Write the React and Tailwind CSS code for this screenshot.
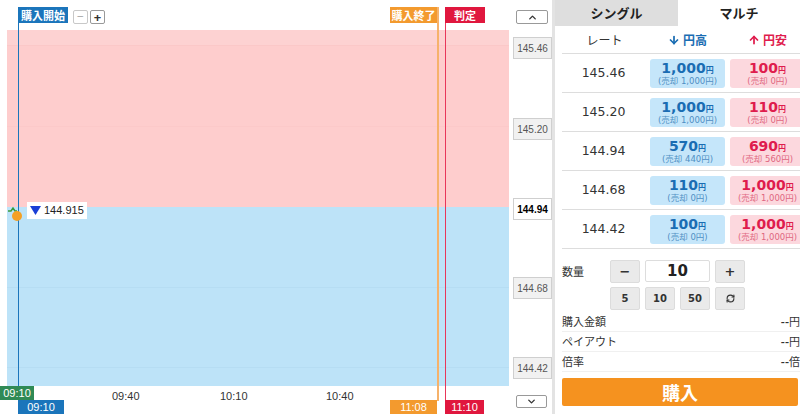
import { ArrowDown, ArrowUp, ChevronDown, ChevronUp, RefreshCw } from "lucide-react";

const jp = "font-['Noto_Sans_CJK_JP',sans-serif]";
const num = "font-['DejaVu_Sans','Noto_Sans_CJK_JP',sans-serif]";
const arial = "font-['Liberation_Sans','Noto_Sans_CJK_JP',sans-serif]";

const rows = [
    { rate: "145.46", up: "1,000", upSell: "1,000", down: "100", downSell: "0" },
    { rate: "145.20", up: "1,000", upSell: "1,000", down: "110", downSell: "0" },
    { rate: "144.94", up: "570", upSell: "440", down: "690", downSell: "560" },
    { rate: "144.68", up: "110", upSell: "0", down: "1,000", downSell: "1,000" },
    { rate: "144.42", up: "100", upSell: "0", down: "1,000", downSell: "1,000" },
];

const axisPrices = [
    { price: "145.46", top: "top-[37px]" },
    { price: "145.20", top: "top-[118px]" },
    { price: "144.94", top: "top-[198px]", current: true },
    { price: "144.68", top: "top-[277px]" },
    { price: "144.42", top: "top-[357px]" },
];

const Chart = () => {
    return (
        <div className="relative w-[509px] h-full flex flex-col">
            <div className="h-[30px] flex items-start pt-[10px] pl-[73px] gap-[2px]">
                <div className="w-[15px] h-[14px] border border-[#c8c8c8] rounded-[2px] flex items-center justify-center text-[#aaa] text-[12px] leading-none">−</div>
                <div className="w-[15px] h-[14px] border border-[#999] rounded-[2px] flex items-center justify-center text-[#333] text-[13px] font-bold leading-none">+</div>
            </div>
            <div className="ml-[7px] h-[177px] bg-[#fecdcd] flex flex-col">
                <div className="h-[16px] bg-[#fdd2d2] border-b border-[#fbc8c8]"></div>
                <div className="h-[81px] border-b border-[#fcc9c9]"></div>
            </div>
            <div className="ml-[7px] h-[179px] bg-[#bde3f8] flex flex-col">
                <div className="h-[81px] border-b border-[#b6ddf3]"></div>
                <div className="h-[80px] border-b border-[#b6ddf3]"></div>
            </div>
            <div className={`relative h-[28px] ${arial} text-[11px] text-[#333]`}>
                <span className="absolute left-[112px] top-[2px]">09:40</span>
                <span className="absolute left-[220px] top-[2px]">10:10</span>
                <span className="absolute left-[326px] top-[2px]">10:40</span>
            </div>

            {/* markers */}
            <div className="absolute left-[18px] top-[7px] bottom-0 w-px bg-[#1b75bb]"></div>
            <div className="absolute left-[437px] top-[7px] bottom-[13px] w-[2px] bg-[#f6b26b]"></div>
            <div className="absolute left-[445px] top-[7px] bottom-[13px] w-px bg-[#e8375a]"></div>

            <div className={`absolute left-[18px] top-[7px] h-[16px] px-[3px] bg-[#1b75bb] text-white text-[11px] font-bold leading-[16px] ${jp}`}>購入開始</div>
            <div className={`absolute left-[390px] top-[7px] h-[16px] w-[47px] bg-[#f39a2e] text-white text-[11px] font-bold leading-[16px] text-center ${jp}`}>購入終了</div>
            <div className={`absolute left-[445px] top-[7px] h-[16px] w-[40px] bg-[#e0173e] text-white text-[11px] font-bold leading-[16px] text-center ${jp}`}>判定</div>

            <div className={`absolute left-0 top-[386px] h-[14px] w-[34px] bg-[#2f8a55] text-white text-[11px] leading-[14px] text-center ${arial}`}>09:10</div>
            <div className={`absolute left-[18px] top-[400px] h-[14px] w-[46px] bg-[#1b75bb] text-white text-[11px] leading-[14px] text-center ${arial}`}>09:10</div>
            <div className={`absolute left-[390px] top-[400px] h-[14px] w-[47px] bg-[#f39a2e] text-white text-[11px] leading-[14px] text-center ${arial}`}>11:08</div>
            <div className={`absolute left-[445px] top-[400px] h-[14px] w-[39px] bg-[#e0173e] text-white text-[11px] leading-[14px] text-center ${arial}`}>11:10</div>

            {/* current price */}
            <svg className="absolute left-[7px] top-[205px]" width="16" height="16" viewBox="0 0 16 16">
                <path d="M1 6 L4 6 L6 3 L8 6 L10 6" fill="none" stroke="#3a9a3a" strokeWidth="1.5" />
                <circle cx="10" cy="11" r="5" fill="#f4a024" />
            </svg>
            <div className={`absolute left-[27px] top-[202px] h-[17px] px-[3px] bg-white flex items-center gap-[3px] text-[11px] text-[#222] ${arial}`}>
                <svg width="11" height="9" viewBox="0 0 11 9">
                    <path d="M0 0 L11 0 L5.5 9 Z" fill="#1a3fd6" />
                </svg>
                144.915
            </div>
        </div>
    );
};

const PriceAxis = () => {
    return (
        <div className="relative w-[46px] h-full border-r-[3px] border-[#e3e3e3]">
            <div className="absolute left-[7px] top-[10px] w-[32px] h-[14px] border border-[#999] rounded-[2px] bg-white flex items-center justify-center">
                <ChevronUp size={11} strokeWidth={3} className="text-[#333]" />
            </div>
            {axisPrices.map((p) => (
                <div
                    key={p.price}
                    className={`absolute left-[4px] ${p.top} w-[39px] h-[22px] border border-[#cfcfcf] flex items-center justify-center text-[10px] ${arial} ${
                        p.current ? "bg-white text-black font-bold" : "bg-[#f1f1f1] text-[#555]"
                    }`}
                >
                    {p.price}
                </div>
            ))}
            <div className="absolute left-[7px] top-[395px] w-[31px] h-[13px] border border-[#999] rounded-[2px] bg-white flex items-center justify-center">
                <ChevronDown size={11} strokeWidth={3} className="text-[#333]" />
            </div>
        </div>
    );
};

const Cell = ({ value, sell, tone }) => {
    const isBlue = tone === "blue";
    return (
        <div
            className={`h-[29px] rounded-[3px] flex flex-col items-center justify-center ${num} ${
                isBlue ? "bg-[#c5e6fa]" : "bg-[#fcd8de]"
            }`}
        >
            <div className={`flex items-baseline leading-none font-bold ${isBlue ? "text-[#1a6db3]" : "text-[#df1c4d]"}`}>
                <span className="text-[14px]">{value}</span>
                <span className="text-[8px]">円</span>
            </div>
            <div className={`text-[8.5px] leading-none mt-[2px] ${isBlue ? "text-[#4f8fc4]" : "text-[#e06680]"}`}>
                (売却 {sell}円)
            </div>
        </div>
    );
};

const SmallButton = ({ children, className = "" }) => (
    <div className={`h-[23px] bg-[#eaeaea] border border-[#dcdcdc] rounded-[2px] flex items-center justify-center text-[#333] ${className}`}>
        {children}
    </div>
);

const InfoRow = ({ label, unit }) => (
    <div className={`h-[20px] border-b border-[#f0f0f0] flex items-center justify-between ${jp} text-[11px] text-[#333]`}>
        <span>{label}</span>
        <span>
            <span className="font-bold">--</span>
            {unit}
        </span>
    </div>
);

const OrderPanel = () => {
    return (
        <div className="w-[245px] h-full flex flex-col bg-white">
            <div className={`h-[26px] flex ${jp} text-[13px] font-bold text-[#222]`}>
                <div className="w-[123px] bg-[#dedede] flex items-center justify-center">シングル</div>
                <div className="flex-1 flex items-center justify-center">マルチ</div>
            </div>
            <div className="pl-[7px]">
                <div className={`h-[28px] border-b border-[#ddd] grid grid-cols-[83px_75px_75px] gap-x-[5px] items-center ${jp} text-[12px]`}>
                    <div className="text-center text-[#333] pl-[2px]">レート</div>
                    <div className="flex items-center justify-center gap-[3px] text-[#1a6db3] font-bold">
                        <ArrowDown size={12} strokeWidth={3.5} />
                        <span>円高</span>
                    </div>
                    <div className="flex items-center justify-center gap-[3px] text-[#df1c4d] font-bold">
                        <ArrowUp size={12} strokeWidth={3.5} />
                        <span>円安</span>
                    </div>
                </div>
                {rows.map((r) => (
                    <div key={r.rate} className="h-[39px] border-b border-[#ddd] grid grid-cols-[83px_75px_75px] gap-x-[5px] items-center">
                        <div className={`text-center text-[12.5px] text-[#333] ${num}`}>{r.rate}</div>
                        <Cell value={r.up} sell={r.upSell} tone="blue" />
                        <Cell value={r.down} sell={r.downSell} tone="red" />
                    </div>
                ))}

                <div className="flex pt-[11px]">
                    <div className={`w-[48px] ${jp} text-[11px] text-[#333] pt-[3px]`}>数量</div>
                    <div className={`grid grid-cols-[30px_30px_30px_30px] gap-x-[5px] gap-y-[4px] ${num}`}>
                        <SmallButton className="h-[22px] text-[13px] font-bold">−</SmallButton>
                        <div className="col-span-2 h-[22px] bg-white border border-[#ddd] rounded-[2px] flex items-center justify-center text-[15px] font-bold text-[#222]">10</div>
                        <SmallButton className="h-[22px] text-[13px] font-bold">+</SmallButton>
                        <SmallButton className="text-[10px] font-bold">5</SmallButton>
                        <SmallButton className="text-[10px] font-bold">10</SmallButton>
                        <SmallButton className="text-[10px] font-bold">50</SmallButton>
                        <SmallButton>
                            <RefreshCw size={9} strokeWidth={3} />
                        </SmallButton>
                    </div>
                </div>

                <div className="mt-[2px]">
                    <InfoRow label="購入金額" unit="円" />
                    <InfoRow label="ペイアウト" unit="円" />
                    <InfoRow label="倍率" unit="倍" />
                </div>

                <div className={`mt-[6px] mr-[2px] h-[28px] bg-[#f5921f] rounded-[2px] flex items-center justify-center text-white text-[18px] font-bold ${jp}`}>
                    購入
                </div>
            </div>
        </div>
    );
};

const App = () => {
    return (
        <div className="w-[800px] h-[414px] flex bg-white overflow-hidden">
            <Chart />
            <PriceAxis />
            <OrderPanel />
        </div>
    );
};

export default App;
